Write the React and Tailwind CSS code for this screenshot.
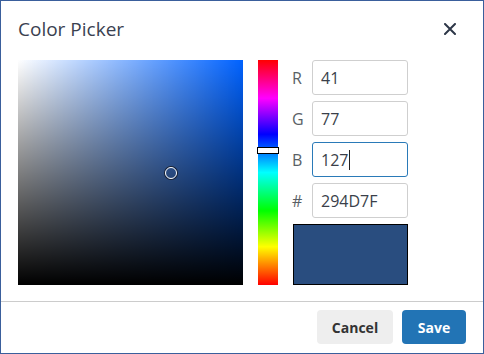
import { useState } from 'react'

const hex = '294D7F'
const rgb = { R: '41', G: '77', B: '127' }

function Field({ label, value, focused }) {
  return (
    <div className="flex h-[35px] items-center">
      <span className="w-[20px] text-[16px] text-[#5a5f66]">{label}</span>
      <div
        className={
          focused
            ? 'flex h-[35px] w-[96px] items-center rounded-[3px] border border-[#2a7ab8] pl-[8px] text-[16px] text-[#3a3f4a]'
            : 'flex h-[35px] w-[96px] items-center rounded-[3px] border border-[#cfcfcf] pl-[8px] text-[16px] text-[#3a3f4a]'
        }
      >
        {value}
        {focused ? <span className="ml-px inline-block h-[20px] w-px bg-[#222]" /> : null}
      </div>
    </div>
  )
}

export default function App() {
  const [open] = useState(true)
  if (!open) return null

  return (
    <div
      className="flex h-[354px] w-[484px] flex-col border border-[#3a5f9c] bg-white"
      style={{ fontFamily: '"Open Sans", "Noto Sans", sans-serif' }}
    >
      <div className="flex h-[59px] items-start justify-between px-[17px] pt-[15px]">
        <h2 className="text-[19px] leading-[26px] text-[#3a4150]">Color Picker</h2>
        <button className="mr-[10px] mt-[7px] text-[#2d3748]">
          <svg width="12" height="12" viewBox="0 0 12 12" fill="none" stroke="currentColor" strokeWidth="2" strokeLinecap="round">
            <path d="M1 1 L11 11 M11 1 L1 11" />
          </svg>
        </button>
      </div>

      <div className="flex px-[17px] pb-[16px]">
        <div className="relative h-[225px] w-[225px] bg-[#0062ff]">
          <div className="absolute inset-0 bg-gradient-to-r from-white to-transparent" />
          <div className="absolute inset-0 bg-gradient-to-b from-transparent to-black" />
          <div className="absolute left-[147px] top-[107px] h-[12px] w-[12px] rounded-full border-[1.5px] border-white ring-1 ring-[#1a2233]" />
        </div>

        <div className="relative ml-[15px] h-[225px] w-[20px] bg-[linear-gradient(to_bottom,#ff0000,#ff00ff_17%,#0000ff_33%,#00ffff_50%,#00ff00_67%,#ffff00_83%,#ff0000)]">
          <div className="absolute left-[-1px] top-[87px] h-[7px] w-[22px] border border-black bg-white" />
        </div>

        <div className="ml-[14px] flex flex-col gap-[6px]">
          {Object.entries(rgb).map(([k, v]) => (
            <Field key={k} label={k} value={v} focused={k === 'B'} />
          ))}
          <Field label="#" value={hex} />
          <div className="ml-px h-[61px] w-[115px] border border-black bg-[#294d7f]" />
        </div>
      </div>

      <div className="flex flex-1 items-start justify-end gap-[9px] border-t border-[#cccccc] pr-[17px] pt-[8px]">
        <button className="h-[34px] w-[76px] rounded-[4px] bg-[#eeeeee] text-[14px] font-bold text-[#333]">Cancel</button>
        <button className="h-[34px] w-[64px] rounded-[4px] bg-[#2274b5] text-[14px] font-bold text-white">Save</button>
      </div>
    </div>
  )
}
